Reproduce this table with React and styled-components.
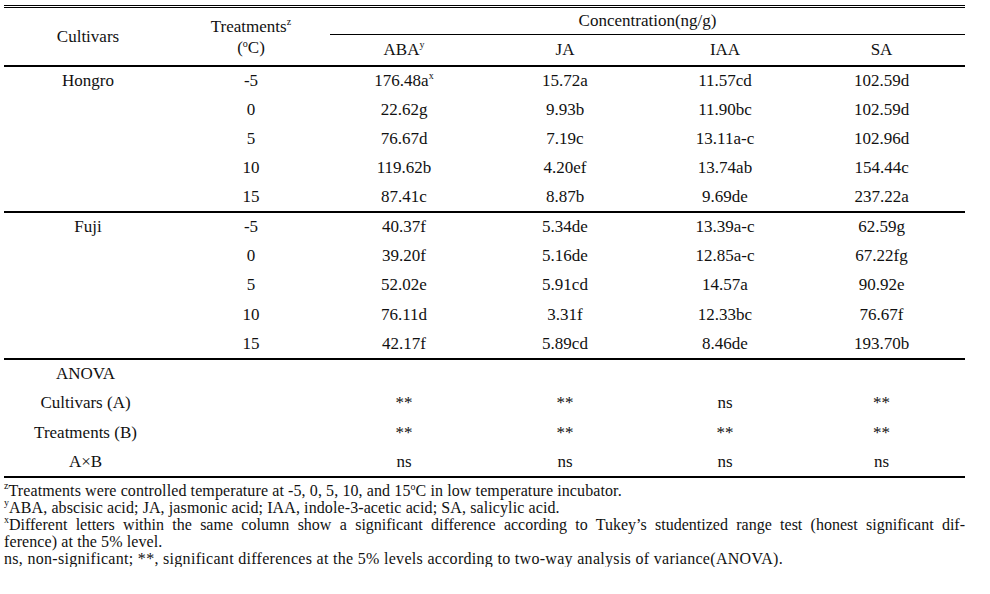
import React from 'react';
import styled, { createGlobalStyle } from 'styled-components';

const GlobalStyle = createGlobalStyle`
  html, body {
    margin: 0;
    padding: 0;
    background: #fff;
  }
  body {
    font-family: 'Liberation Serif', 'Times New Roman', serif;
    color: #111;
  }
`;

const Page = styled.div`
  width: 961px;
  padding: 5px 0 0 4px;
`;

const Table = styled.table`
  width: 961px;
  border-collapse: collapse;
  table-layout: fixed;
  border-top: 3px double #000;
  border-bottom: 2px solid #000;
  font-size: 17px;
`;

const HeadCell = styled.th`
  font-weight: normal;
  text-align: center;
  vertical-align: middle;
  padding: 0;
  height: ${(p) => p.$h || 28}px;
  line-height: ${(p) => p.$lh || 20}px;
  border-bottom: ${(p) => (p.$line ? `${p.$line}px solid #000` : 'none')};
`;

const Row = styled.tr`
  height: ${(p) => p.$h || 29}px;
  border-top: ${(p) => (p.$divider ? '2px solid #000' : 'none')};
`;

const Cell = styled.td`
  text-align: center;
  padding: 0 ${(p) => p.$pr || 0}px 0 0;
  line-height: 20px;
`;

const Sup = styled.sup`
  font-size: 10px;
  line-height: 0;
  vertical-align: ${(p) => p.$raise || 7}px;
`;

const Notes = styled.div`
  width: 961px;
  padding-top: 4px;
  font-size: 16px;
  line-height: 17px;
`;

const NoteLine = styled.div`
  height: 17px;
  letter-spacing: ${(p) => p.$spacing ?? 0.1}px;
  text-align: ${(p) => (p.$justify ? 'justify' : 'left')};
  text-align-last: ${(p) => (p.$justify ? 'justify' : 'left')};
  white-space: nowrap;
`;

const hongro = [
  ['-5', ['176.48a', 'x'], '15.72a', '11.57cd', '102.59d'],
  ['0', '22.62g', '9.93b', '11.90bc', '102.59d'],
  ['5', '76.67d', '7.19c', '13.11a-c', '102.96d'],
  ['10', '119.62b', '4.20ef', '13.74ab', '154.44c'],
  ['15', '87.41c', '8.87b', '9.69de', '237.22a'],
];

const fuji = [
  ['-5', '40.37f', '5.34de', '13.39a-c', '62.59g'],
  ['0', '39.20f', '5.16de', '12.85a-c', '67.22fg'],
  ['5', '52.02e', '5.91cd', '14.57a', '90.92e'],
  ['10', '76.11d', '3.31f', '12.33bc', '76.67f'],
  ['15', '42.17f', '5.89cd', '8.46de', '193.70b'],
];

const anova = [
  ['ANOVA', '', '', '', ''],
  ['Cultivars (A)', '**', '**', 'ns', '**'],
  ['Treatments (B)', '**', '**', '**', '**'],
  ['A\u00d7B', 'ns', 'ns', 'ns', 'ns'],
];

const widths = [168, 158, 148, 174, 146, 167];

const Value = ({ v }) =>
  Array.isArray(v) ? (
    <>
      {v[0]}
      <Sup>{v[1]}</Sup>
    </>
  ) : (
    v
  );

const Group = ({ name, rows, divider, rowH }) =>
  rows.map((r, i) => (
    <Row key={i} $divider={divider && i === 0} $h={rowH}>
      <Cell>{i === 0 ? name : ''}</Cell>
      {r.map((v, j) => (
        <Cell key={j}>
          <Value v={v} />
        </Cell>
      ))}
    </Row>
  ));

export default function App() {
  return (
    <Page>
      <GlobalStyle />
      <Table>
        <colgroup>
          {widths.map((w, i) => (
            <col key={i} style={{ width: w }} />
          ))}
        </colgroup>
        <thead>
          <tr>
            <HeadCell rowSpan={2} $line={2}>
              Cultivars
            </HeadCell>
            <HeadCell rowSpan={2} $line={2} $lh={21}>
              Treatments<Sup>z</Sup>
              <br />(<Sup $raise={6}>o</Sup>C)
            </HeadCell>
            <HeadCell colSpan={4} $line={1} $h={26}>
              Concentration(ng/g)
            </HeadCell>
          </tr>
          <tr>
            <HeadCell $line={2} $h={30}>
              ABA<Sup>y</Sup>
            </HeadCell>
            <HeadCell $line={2} $h={30}>JA</HeadCell>
            <HeadCell $line={2} $h={30}>IAA</HeadCell>
            <HeadCell $line={2} $h={30}>SA</HeadCell>
          </tr>
        </thead>
        <tbody>
          <Group name="Hongro" rows={hongro} rowH={29.2} />
          <Group name="Fuji" rows={fuji} rowH={29.4} divider />
          {anova.map((r, i) => (
            <Row key={i} $divider={i === 0} $h={29.5}>
              <Cell $pr={5}>{r[0]}</Cell>
              <Cell />
              {r.slice(1).map((v, j) => (
                <Cell key={j}>{v}</Cell>
              ))}
            </Row>
          ))}
        </tbody>
      </Table>
      <Notes>
        <NoteLine>
          <Sup>z</Sup>Treatments were controlled temperature at -5, 0, 5, 10, and 15
          <Sup $raise={6}>o</Sup>C in low temperature incubator.
        </NoteLine>
        <NoteLine>
          <Sup>y</Sup>ABA, abscisic acid; JA, jasmonic acid; IAA, indole-3-acetic acid; SA,
          salicylic acid.
        </NoteLine>
        <NoteLine $justify $spacing={0}>
          <Sup>x</Sup>Different letters within the same column show a significant difference
          according to Tukey’s studentized range test (honest significant dif-
        </NoteLine>
        <NoteLine>ference) at the 5% level.</NoteLine>
        <NoteLine $spacing={0.3}>
          ns, non-significant; **, significant differences at the 5% levels according to two-way
          analysis of variance(ANOVA).
        </NoteLine>
      </Notes>
    </Page>
  );
}
